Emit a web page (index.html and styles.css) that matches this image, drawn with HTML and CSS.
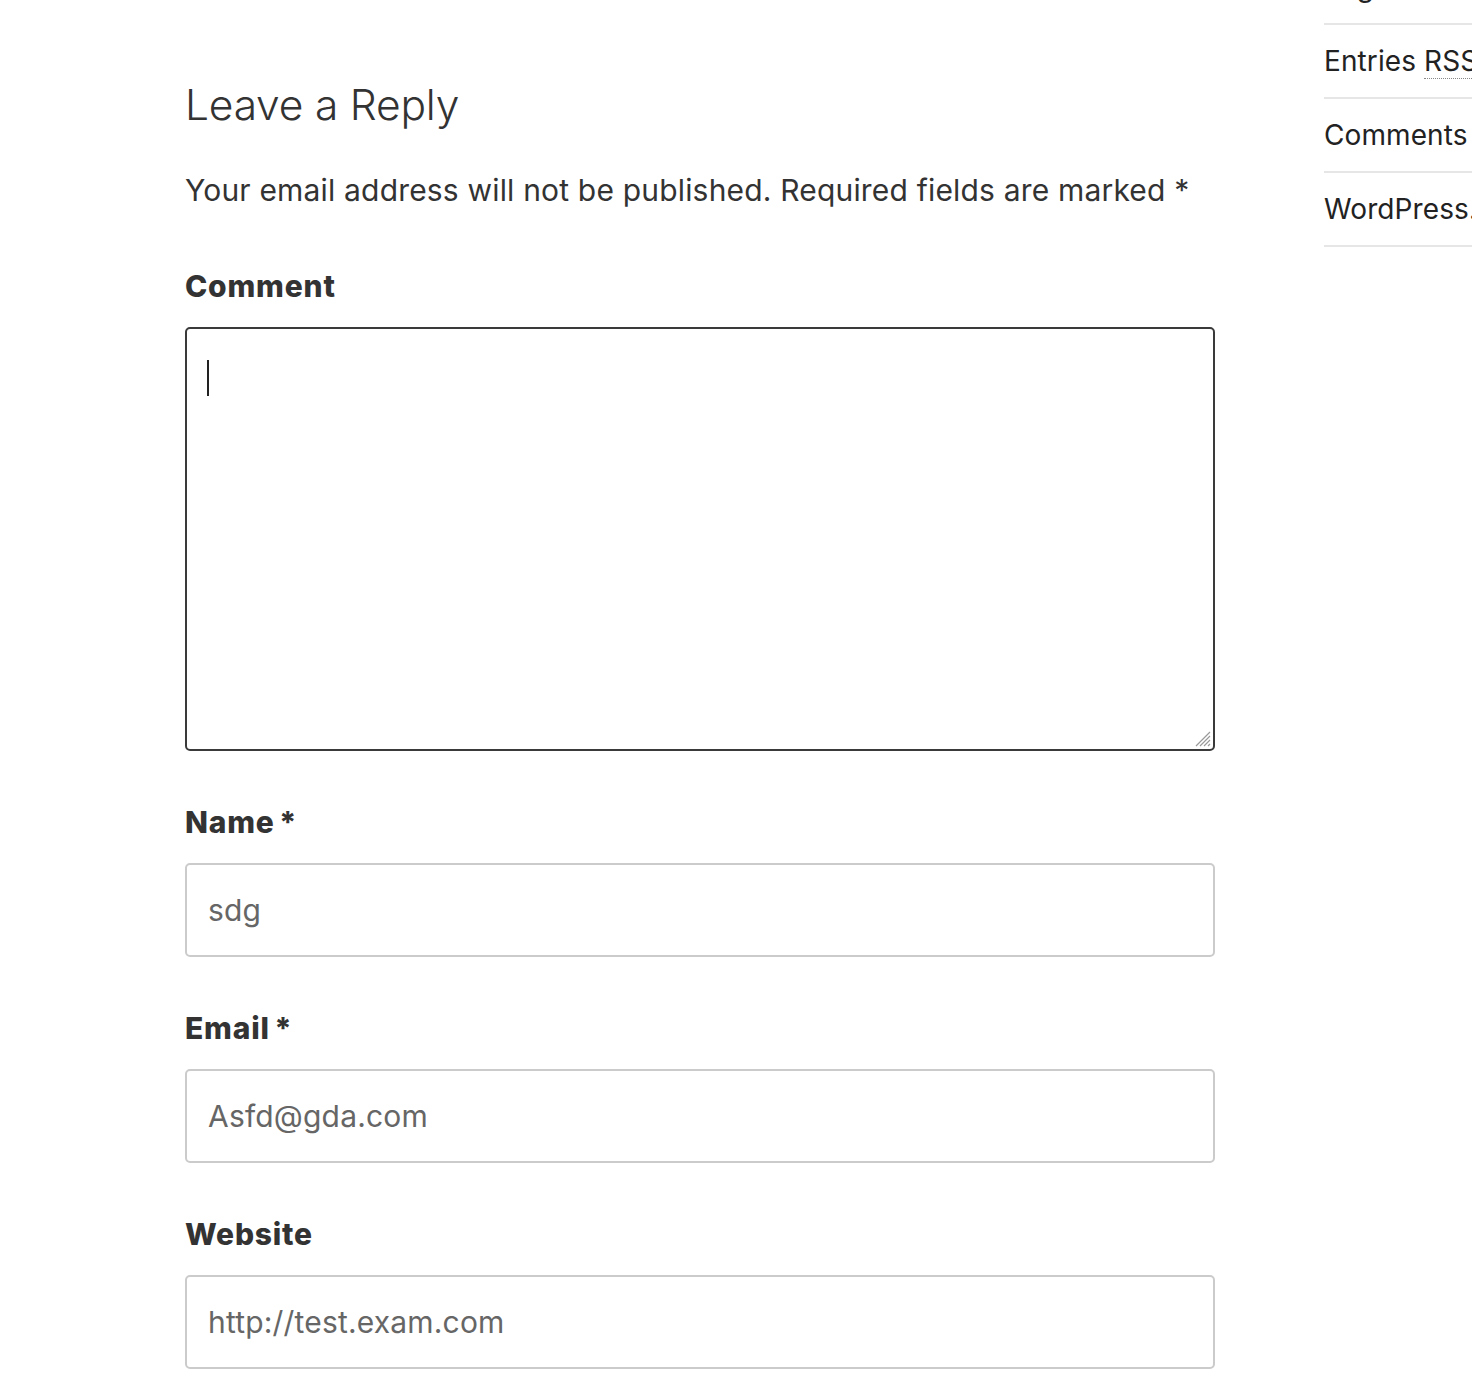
FILE: index.html
```html
<!DOCTYPE html>
<html>
<head>
<meta charset="utf-8">
<title>Leave a Reply</title>
<link rel="stylesheet" href="styles.css">
</head>
<body>
<div class="page">
  <main class="main">
    <section class="respond">
      <h3 class="reply-title">Leave a Reply</h3>
      <p class="notes">Your email address will not be published. Required fields are marked <span class="req">*</span></p>
      <div class="field">
        <label class="label">Comment</label>
        <div class="textarea">
          <span class="caret"></span>
          <svg class="grip" width="22" height="22" viewBox="0 0 22 22" aria-hidden="true">
            <path d="M20 6 L6 20 M20 10 L10 20 M20 14 L14 20 M20 18 L18 20" stroke="#9a9a9a" stroke-width="1.2" fill="none"/>
          </svg>
        </div>
      </div>
      <div class="field">
        <label class="label">Name <span class="req">*</span></label>
        <input class="input" type="text" value="sdg">
      </div>
      <div class="field">
        <label class="label">Email <span class="req">*</span></label>
        <input class="input" type="text" value="Asfd@gda.com">
      </div>
      <div class="field">
        <label class="label">Website</label>
        <input class="input" type="text" value="http://test.exam.com">
      </div>
    </section>
  </main>
  <aside class="sidebar">
    <ul class="meta">
      <li class="meta-item"><a class="meta-link">Log in</a></li>
      <li class="meta-item"><a class="meta-link">Entries <abbr class="abbr">RSS</abbr></a></li>
      <li class="meta-item"><a class="meta-link">Comments <abbr class="abbr">RSS</abbr></a></li>
      <li class="meta-item"><a class="meta-link">WordPress.org</a></li>
    </ul>
  </aside>
</div>
</body>
</html>
```
FILE: styles.css
```css
html, body {
  margin: 0;
  padding: 0;
  background: #fff;
  overflow: hidden;
}
body {
  font-family: Inter, "Noto Sans", sans-serif;
  color: #333;
  font-size: 30px;
  line-height: 1.66;
  letter-spacing: 0.18px;
}
.page {
  display: flex;
  align-items: flex-start;
  width: 1800px;
}
.main {
  margin-left: 185px;
  width: 1030px;
  flex: none;
}
.respond {
  padding-top: 73px;
}
.reply-title {
  margin: 0;
  font-size: 42.5px;
  font-weight: 300;
  line-height: 63px;
  letter-spacing: -0.2px;
  color: #333;
}
.notes {
  margin: 29px 0 0;
  line-height: 50px;
  color: #333;
}
.field {
  margin-top: 46px;
}
.label {
  display: block;
  font-weight: 800;
  line-height: 50px;
  letter-spacing: 0.8px;
  word-spacing: -3px;
  color: #333;
  margin-bottom: 16px;
}
.label .req {
  letter-spacing: 0;
}
.textarea {
  position: relative;
  box-sizing: border-box;
  height: 424px;
  border: 2px solid #3a3a3a;
  border-radius: 5px;
  padding: 21px;
  line-height: 50px;
}
.caret {
  display: inline-block;
  width: 2px;
  height: 36px;
  background: #222;
  vertical-align: middle;
  margin-left: -1px;
}
.grip {
  position: absolute;
  right: 1px;
  bottom: 1px;
}
.input {
  display: block;
  box-sizing: border-box;
  width: 100%;
  height: 94px;
  margin: 0;
  border: 2px solid #cbcbcb;
  border-radius: 5px;
  padding: 0 21px;
  font-family: Inter, "Noto Sans", sans-serif;
  font-size: 30px;
  letter-spacing: 0.18px;
  color: #666;
  background: #fff;
  outline: none;
}
.sidebar {
  margin-left: 109px;
  width: 320px;
  flex: none;
}
.meta {
  list-style: none;
  margin: -49px 0 0;
  padding: 0;
}
.meta-item {
  border-bottom: 2px solid #e6e6e6;
  padding: 12px 0;
  font-size: 28px;
  line-height: 48px;
  white-space: nowrap;
  letter-spacing: 0.1px;
}
.meta-link {
  color: #222;
  text-decoration: none;
}
.abbr {
  text-decoration: none;
  border-bottom: 1px dotted #888;
}
```
